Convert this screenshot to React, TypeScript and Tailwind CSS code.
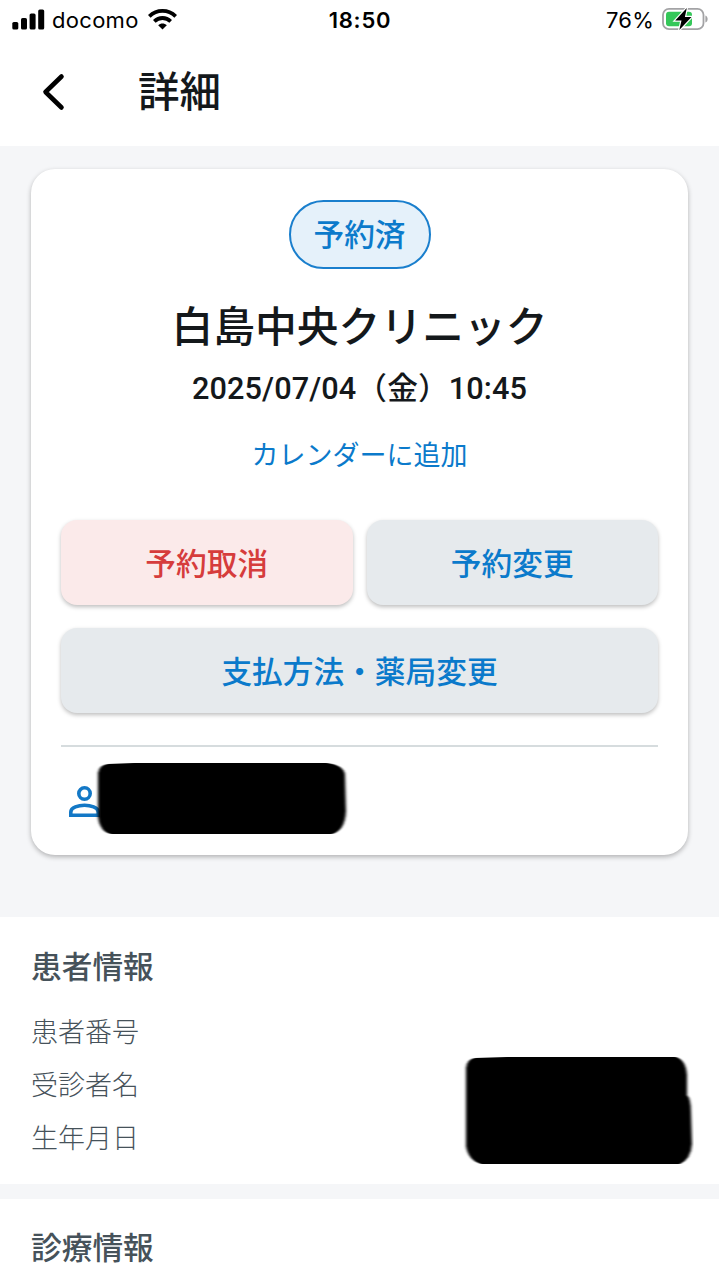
import clsx from "clsx";

type ActionButtonProps = {
  text: string;
  variant?: "default" | "danger";
  className?: string;
};

function StatusBar() {
  return (
    <div className="grid h-10 grid-cols-3 items-center pr-[11px] pl-3 font-['Inter','Liberation_Sans',sans-serif] text-[22px] leading-10 text-black">
      <div className="flex items-center">
        <svg width="33" height="21" viewBox="0 0 33 21" fill="black" className="mb-[2px] shrink-0">
          <rect x="0.3" y="13" width="6" height="7.5" rx="1.6" />
          <rect x="9" y="9" width="6" height="11.5" rx="1.6" />
          <rect x="17.6" y="4.5" width="6" height="16" rx="1.6" />
          <rect x="26.2" y="0.5" width="6" height="20" rx="1.6" />
        </svg>
        <span className="ml-[7px] w-[87px] tracking-[0.3px]">docomo</span>
        <svg width="29" height="21" viewBox="0 0 29 21" fill="none" stroke="black" strokeWidth="3.8" className="mb-[1px] ml-[9px] shrink-0">
          <path d="M1.3 7.3C8.8 .1 20.2 .1 27.7 7.3" />
          <path d="M6.3 12.3C11 7.9 18 7.9 22.7 12.3" />
          <path d="M14.5 20.6L10.2 16.3C12.6 13.9 16.4 13.9 18.8 16.3Z" fill="black" stroke="none" />
        </svg>
      </div>
      <div className="text-center font-semibold tracking-[0.8px]">18:50</div>
      <div className="flex items-center justify-end">
        <span className="tracking-[0.2px]">76%</span>
        <svg width="46" height="26" viewBox="0 0 46 26" className="mb-[2px] ml-2 shrink-0">
          <rect x="1" y="2.8" width="40.5" height="20.4" rx="6" fill="white" stroke="#a3a3a5" strokeWidth="1.8" />
          <rect x="4" y="5.8" width="26" height="14.4" rx="3" fill="#35c759" />
          <path d="M43.4 9.4C46.4 10.6 46.4 15.4 43.4 16.6Z" fill="#a3a3a5" />
          <path d="M24.8 2L13.2 14.5H19.5L17.3 24L29.5 11H22.9Z" fill="black" stroke="white" strokeWidth="2.4" paintOrder="stroke" />
        </svg>
      </div>
    </div>
  );
}

function ActionButton({ text, variant = "default", className }: ActionButtonProps) {
  return (
    <button
      type="button"
      className={clsx(
        "h-[85px] cursor-pointer rounded-[16px] pt-[5px] text-[30.7px] font-medium shadow-[0_2px_4px_rgba(0,0,0,0.26)]",
        variant === "danger" ? "bg-[#fbeaea] text-[#d63c3c]" : "bg-[#e6eaed] text-[#0b7acb]",
        className,
      )}
    >
      {text}
    </button>
  );
}

const PATIENT_ROWS = ["患者番号", "受診者名", "生年月日"];

export default function App() {
  return (
    <main className="flex h-[1280px] w-[719px] flex-col overflow-hidden bg-[#f5f6f8] font-['Roboto','Noto_Sans_CJK_JP',sans-serif] text-[#14181b]">
      <header className="h-[146px] shrink-0 bg-white">
        <StatusBar />
        <div className="flex h-[103px] items-center pl-[42px]">
          <button type="button" aria-label="戻る" className="cursor-pointer">
            <svg width="24" height="38" viewBox="0 0 24 38" fill="none" stroke="black" strokeWidth="4.6" strokeLinecap="round" strokeLinejoin="round" className="mt-[1px]">
              <path d="M19.5 3.5L3.5 19L19.5 34.5" />
            </svg>
          </button>
          <h1 className="ml-[72px] pt-[2px] text-[41.5px] leading-[60px] font-medium">詳細</h1>
        </div>
      </header>

      <section className="mx-[31px] mt-[23px] flex h-[686px] shrink-0 flex-col items-center rounded-[24px] bg-white px-[30px] pt-[31px] shadow-[0_2px_5px_rgba(0,0,0,0.28)]">
        <div className="flex h-[69px] w-[142px] items-center justify-center rounded-full border-2 border-[#1a7fcd] bg-[#e5f1fa] pt-[3px] text-[30.7px] font-medium text-[#0b7acb]">
          予約済
        </div>
        <h2 className="mt-[29px] text-[41.8px] leading-[60px] font-medium">白島中央クリニック</h2>
        <p className="mt-[9px] text-[30.7px] leading-[44px] font-medium tracking-[0.1px]">2025/07/04（金）10:45</p>
        <a className="mt-[25px] cursor-pointer text-[27px] leading-10 text-[#0b7acb]">カレンダーに追加</a>

        {/* Actions */}
        <div className="mt-[44px] grid w-full grid-cols-2 gap-x-[14px] gap-y-[23px]">
          <ActionButton text="予約取消" variant="danger" />
          <ActionButton text="予約変更" />
          <ActionButton text="支払方法・薬局変更" className="col-span-2" />
        </div>

        <div className="mt-8 h-[2px] w-full shrink-0 bg-[#d6dcde]" />

        {/* Patient */}
        <div className="mt-[12px] flex w-full items-start pl-2">
          <svg width="31" height="31" viewBox="0 0 31 31" fill="none" stroke="#1378c6" strokeWidth="3.6" className="mt-[27px] shrink-0">
            <circle cx="15.5" cy="7.5" r="5.7" />
            <path d="M1.8 29.2V26C1.8 21.5 9.5 19.3 15.5 19.3S29.2 21.5 29.2 26V29.2Z" />
          </svg>
          <svg width="256" height="80" viewBox="0 0 256 80" className="relative -ml-[6px]">
            <defs>
              <filter id="soft-edge">
                <feGaussianBlur stdDeviation="1.5 0.7" />
              </filter>
            </defs>
            <path
              d="M14 5L40 4H233Q250 6 251 16L252 52Q251 72 238 75H17Q6 73 4 58V14Q5 6 14 5Z"
              fill="black"
              filter="url(#soft-edge)"
            />
          </svg>
        </div>
      </section>

      <section className="mt-[62px] flex h-[267px] shrink-0 justify-between bg-white pr-[25px] pl-[31px] text-[#46525a]">
        <div>
          <h3 className="mt-[29px] text-[30.7px] leading-[44px] font-medium">患者情報</h3>
          <div className="mt-[17px] text-[27px] leading-[53px] font-light">
            {PATIENT_ROWS.map((label) => (
              <div key={label}>{label}</div>
            ))}
          </div>
        </div>
        <svg width="232" height="114" viewBox="0 0 232 114" className="mt-[137px]">
          <defs>
            <filter id="soft">
              <feGaussianBlur stdDeviation="1.5 0.7" />
            </filter>
          </defs>
          <path
            d="M13 4L45 3H214Q224 6 225 21V41Q229 45 229 58L230 90Q229 105 218 110H19Q6 106 4 92V14Q5 5 13 4Z"
            fill="black"
            filter="url(#soft)"
          />
        </svg>
      </section>

      <section className="mt-[15px] h-[81px] bg-white pl-[31px] text-[#46525a]">
        <h3 className="pt-[28px] text-[30.7px] leading-[44px] font-medium">診療情報</h3>
      </section>
    </main>
  );
}
